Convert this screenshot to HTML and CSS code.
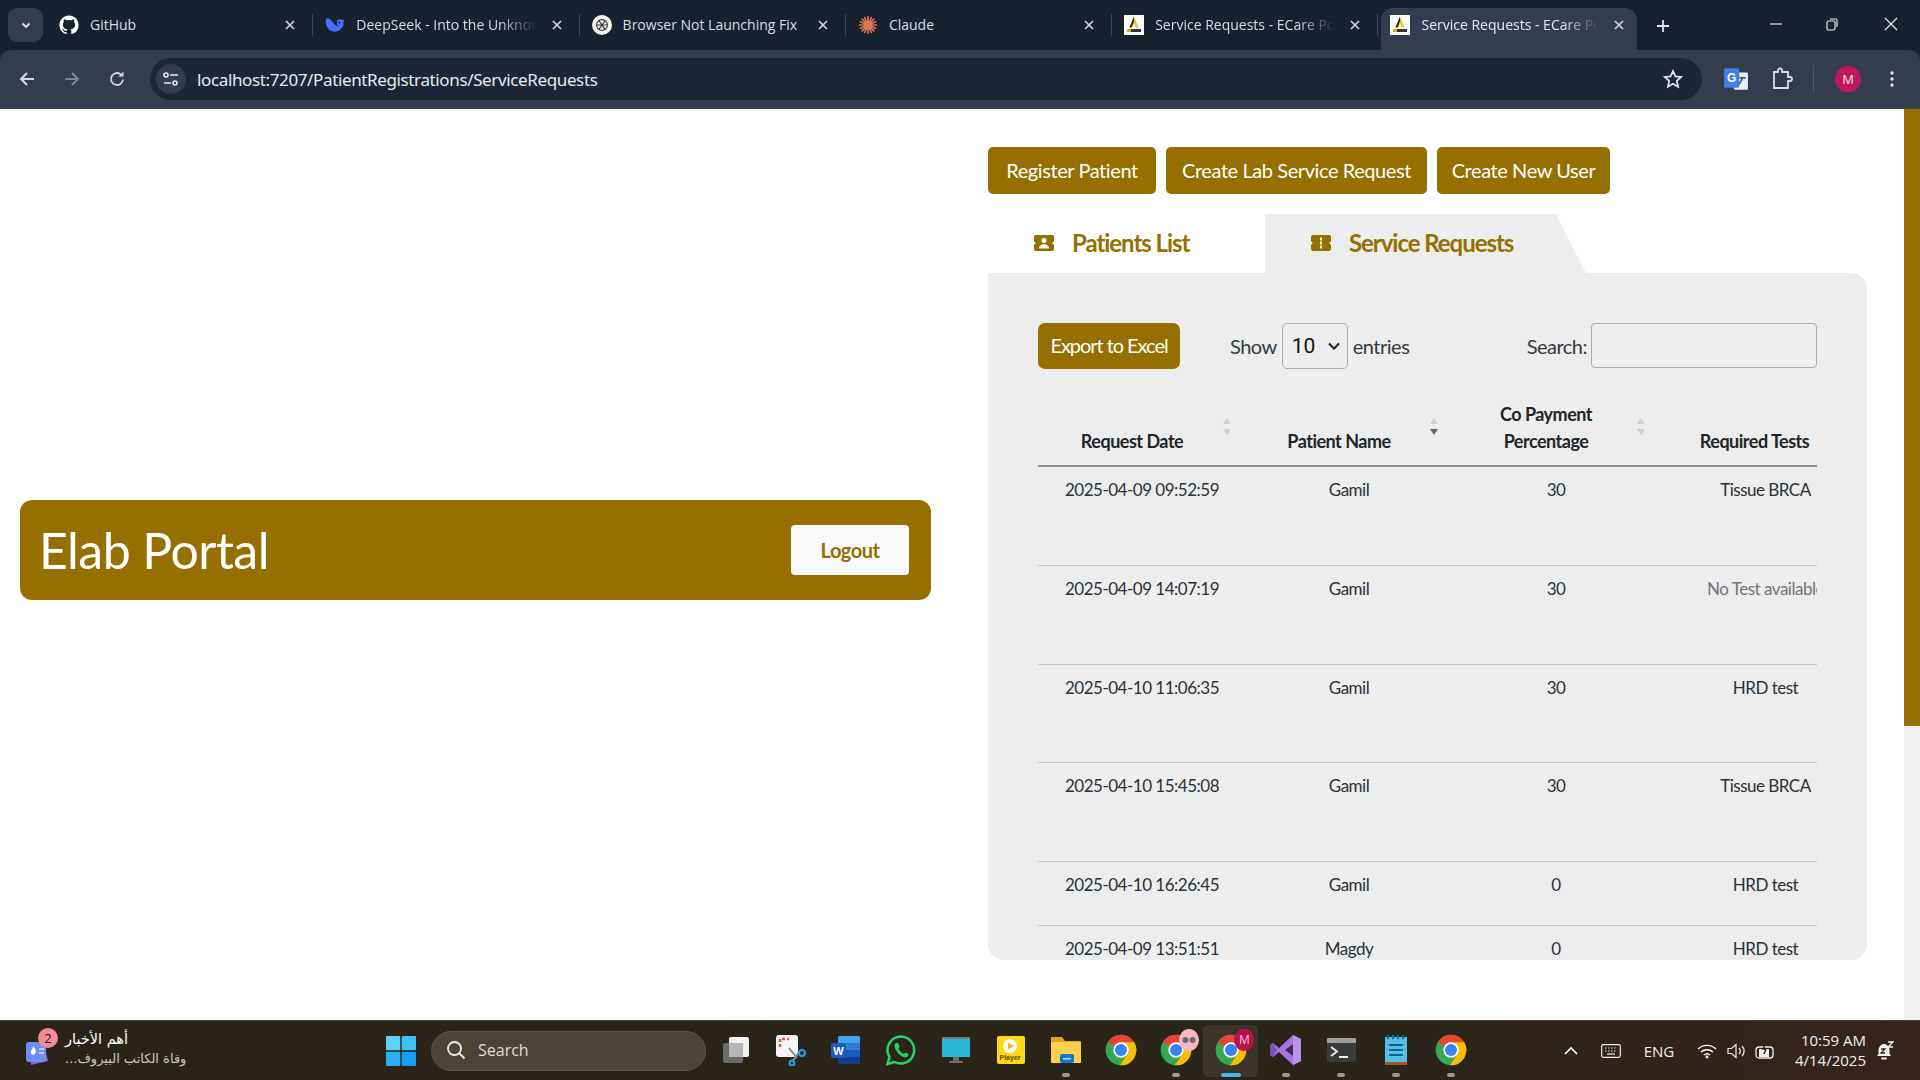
FILE: index.html
```html
<!DOCTYPE html>
<html lang="en">
<head>
<meta charset="utf-8">
<title>Service Requests - ECare Portal</title>
<link rel="stylesheet" href="styles.css">
</head>
<body>
<svg class="defs" width="0" height="0" aria-hidden="true">
  <symbol id="chrome" viewBox="0 0 48 48">
    <circle cx="24" cy="24" r="23" fill="#34a853"/>
    <path d="M4.1 12.5A23 23 0 0 1 43.9 12.5H24A11.5 11.5 0 0 0 14 18Z" fill="#ea4335"/>
    <path d="M43.9 12.5H24L34 30 22.3 46.9A23 23 0 0 0 43.9 12.5Z" fill="#fbbc04"/>
    <circle cx="24" cy="24" r="11.5" fill="#fff"/>
    <circle cx="24" cy="24" r="9" fill="#3b82f0"/>
  </symbol>
  <symbol id="ecare" viewBox="0 0 20 20">
    <rect width="20" height="20" fill="#fff"/>
    <path d="M10 1.500 14.500 12.500H11.500L10 8 8.500 12.500H5.500Z" fill="#e9c41c"/>
    <path d="M10 1.500 5.500 12.500H7.500L10 6Z" fill="#222"/>
    <rect x="3" y="14" width="4" height="3" fill="#e0a81c"/>
    <rect x="7" y="14" width="10" height="3" fill="#333"/>
  </symbol>
  <symbol id="close" viewBox="0 0 12 12">
    <path d="M2 2 10 10M10 2 2 10" stroke="#d5dae2" stroke-width="1.6" fill="none"/>
  </symbol>
</svg>

<header class="chrome">
  <div class="tabstrip">
    <button class="tab-search" aria-label="Search tabs">
      <svg class="ico-12" viewBox="0 0 12 12"><path d="M2.5 4.5 6 8l3.5-3.5" stroke="#e4e8ee" stroke-width="1.8" fill="none"/></svg>
    </button>
    <div class="tab">
      <svg class="favicon" viewBox="0 0 24 24"><path fill="#fff" d="M12 .5C5.65.5.5 5.65.5 12c0 5.08 3.29 9.39 7.86 10.91.58.1.79-.25.79-.56 0-.28-.01-1.02-.02-2-3.2.7-3.87-1.54-3.87-1.54-.52-1.33-1.28-1.68-1.28-1.68-1.04-.71.08-.7.08-.7 1.15.08 1.76 1.19 1.76 1.19 1.03 1.76 2.69 1.25 3.35.96.1-.75.4-1.25.73-1.54-2.55-.29-5.24-1.28-5.24-5.68 0-1.25.45-2.28 1.18-3.08-.12-.29-.51-1.46.11-3.04 0 0 .96-.31 3.15 1.18a10.9 10.9 0 0 1 5.74 0c2.19-1.49 3.15-1.18 3.15-1.18.62 1.58.23 2.75.11 3.04.73.8 1.18 1.83 1.18 3.08 0 4.41-2.69 5.38-5.25 5.67.41.36.78 1.06.78 2.14 0 1.55-.01 2.8-.01 3.18 0 .31.21.67.8.56A11.51 11.51 0 0 0 23.5 12C23.5 5.65 18.35.5 12 .5z"/></svg>
      <span class="tab-title">GitHub</span>
      <svg class="tab-close"><use href="#close"/></svg>
    </div>
    <div class="tab">
      <svg class="favicon" viewBox="0 0 24 24"><path fill="#4d6bfe" d="M23 5c-1 .5-1.400 1-2 1.700C20 5.500 18.800 5 17.500 5.200 15 5.500 14 7.500 14 9l1.500 5c-2-.8-5-3.500-7-6.500C7.500 6 5.500 4.500 3 4 1 4 .5 7 1 10c.8 5 4.500 10 10 10 4 0 6.500-1.500 8-3.500 2.500-1 3.500-4 3-7.500 .5-1 1-2.500 1-4.500Z"/><circle cx="17" cy="9" r="1.300" fill="#17212f"/></svg>
      <span class="tab-title fade">DeepSeek - Into the Unknown</span>
      <svg class="tab-close"><use href="#close"/></svg>
    </div>
    <div class="tab">
      <svg class="favicon" viewBox="0 0 24 24"><circle cx="12" cy="12" r="12" fill="#f4f4f4"/><g fill="none" stroke="#333" stroke-width="1.300"><circle cx="12" cy="12" r="6.500"/><path d="M8 6.500 16 17.500M16 6.500 8 17.500M5.500 12H18.500"/></g></svg>
      <span class="tab-title">Browser Not Launching Fix</span>
      <svg class="tab-close"><use href="#close"/></svg>
    </div>
    <div class="tab">
      <svg class="favicon" viewBox="0 0 24 24"><g stroke="#d97757" stroke-width="2" stroke-linecap="round"><path d="M12 2V22M2 12H22M5 5 19 19M19 5 5 19M8 3 16 21M16 3 8 21M3 8 21 16M3 16 21 8"/></g></svg>
      <span class="tab-title">Claude</span>
      <svg class="tab-close"><use href="#close"/></svg>
    </div>
    <div class="tab">
      <svg class="favicon"><use href="#ecare"/></svg>
      <span class="tab-title fade">Service Requests - ECare Portal</span>
      <svg class="tab-close"><use href="#close"/></svg>
    </div>
    <div class="tab tab-active">
      <svg class="favicon"><use href="#ecare"/></svg>
      <span class="tab-title fade">Service Requests - ECare Portal</span>
      <svg class="tab-close"><use href="#close"/></svg>
    </div>
    <svg class="new-tab" viewBox="0 0 14 14"><path d="M7 1V13M1 7H13" stroke="#dfe3ea" stroke-width="1.800"/></svg>
    <div class="win-controls">
      <svg class="win-ico" viewBox="0 0 14 14"><path d="M1 7H13" stroke="#e8ebef" stroke-width="1.200"/></svg>
      <svg class="win-ico" viewBox="0 0 14 14"><rect x="2" y="4" width="8" height="9" rx="1.500" fill="none" stroke="#e8ebef" stroke-width="1.200"/><path d="M5 2H10.500A1.500 1.500 0 0 1 12 3.500V10" fill="none" stroke="#e8ebef" stroke-width="1.200"/></svg>
      <svg class="win-ico win-close" viewBox="0 0 14 14"><path d="M1 1 13 13M13 1 1 13" stroke="#e8ebef" stroke-width="1.200"/></svg>
    </div>
  </div>
  <div class="toolbar">
    <svg class="nav-ico" viewBox="0 0 18 18"><path d="M16 9H3M9 3 3 9l6 6" stroke="#d5dae2" stroke-width="2" fill="none"/></svg>
    <svg class="nav-ico" viewBox="0 0 18 18"><path d="M2 9H15M9 3l6 6-6 6" stroke="#7c8594" stroke-width="2" fill="none"/></svg>
    <svg class="nav-ico" viewBox="0 0 18 18"><path d="M15 9.500A6 6 0 1 1 13 4.500" stroke="#d5dae2" stroke-width="1.800" fill="none"/><path d="M15.500 1.500V6.500H10.500Z" fill="#d5dae2"/></svg>
    <div class="omnibox">
      <span class="site-chip">
        <svg class="ico-18" viewBox="0 0 18 18"><g stroke="#e4e8ee" stroke-width="1.600" fill="none"><path d="M8 5H16M2 13H9"/><circle cx="4" cy="5" r="2"/><circle cx="13" cy="13" r="2"/></g></svg>
      </span>
      <span class="url">localhost:7207/PatientRegistrations/ServiceRequests</span>
      <svg class="star" viewBox="0 0 20 20"><path d="M10 2 12.400 7.400 18.200 8 13.800 11.900 15.100 17.700 10 14.700 4.900 17.700 6.200 11.900 1.800 8 7.600 7.400Z" fill="none" stroke="#e4e8ee" stroke-width="1.700"/></svg>
    </div>
    <svg class="translate" viewBox="0 0 24 24"><rect x="10" y="6" width="13" height="16" rx="1" fill="#e9edf1"/><path d="M14 18 19 10M15 11h6" stroke="#555" stroke-width="1.500"/><rect x="1" y="2" width="14" height="18" rx="1.500" fill="#3f7fe8"/><text x="8" y="15" class="translate-g">G</text></svg>
    <svg class="ext" viewBox="0 0 24 24"><path d="M9 5V3.500A2 2 0 0 1 13 3.500V5H19V10H21A2 2 0 0 1 21 14H19V21H5V5Z" fill="none" stroke="#d5dae2" stroke-width="1.800"/></svg>
    <span class="tool-sep"></span>
    <span class="avatar">M</span>
    <svg class="menu" viewBox="0 0 4 18"><g fill="#dfe3ea"><circle cx="2" cy="3" r="1.700"/><circle cx="2" cy="9" r="1.700"/><circle cx="2" cy="15" r="1.700"/></g></svg>
  </div>
</header>

<div class="viewport">
  <main class="page">
    <section class="left-col">
      <div class="brand-card">
        <h1 class="brand-title">Elab Portal</h1>
        <button class="btn-logout">Logout</button>
      </div>
    </section>
    <section class="right-col">
      <div class="actions">
        <button class="btn btn-action">Register Patient</button>
        <button class="btn btn-action">Create Lab Service Request</button>
        <button class="btn btn-action">Create New User</button>
      </div>
      <div class="tabs">
        <div class="page-tab page-tab-plain">
          <svg class="tab-ico" viewBox="0 0 20 16"><path fill="#957000" fill-rule="evenodd" d="M2 0H18A2 2 0 0 1 20 2V6.500A1.500 1.500 0 0 0 20 9.500V14A2 2 0 0 1 18 16H2A2 2 0 0 1 0 14V9.500A1.500 1.500 0 0 0 0 6.500V2A2 2 0 0 1 2 0ZM10 3A2.500 2.500 0 1 0 10 8 2.500 2.500 0 0 0 10 3ZM5 13.500H15C15 11 12.800 9.300 10 9.300S5 11 5 13.500Z"/></svg>
          <span>Patients List</span>
        </div>
        <div class="page-tab page-tab-active">
          <svg class="tab-ico" viewBox="0 0 20 16"><path fill="#957000" fill-rule="evenodd" d="M2 0H18A2 2 0 0 1 20 2V6.500A1.500 1.500 0 0 0 20 9.500V14A2 2 0 0 1 18 16H2A2 2 0 0 1 0 14V9.500A1.500 1.500 0 0 0 0 6.500V2A2 2 0 0 1 2 0ZM9 2.500V5.500H11V2.500ZM9 6.500V9.500H11V6.500ZM9 10.500V13.500H11V10.500Z"/></svg>
          <span>Service Requests</span>
        </div>
      </div>
      <div class="panel">
        <div class="table-tools">
          <button class="btn btn-export">Export to Excel</button>
          <label class="show-entries">Show
            <select class="entries-select"><option>10</option><option>25</option></select>
            entries</label>
          <label class="search-label">Search: <input class="search-input" type="text"></label>
        </div>
        <div class="table-wrap">
          <table class="data-table">
            <thead>
              <tr>
                <th><span class="th-label">Request Date</span><span class="sort"><i class="up"></i><i class="down"></i></span></th>
                <th><span class="th-label">Patient Name</span><span class="sort"><i class="up"></i><i class="down on"></i></span></th>
                <th><span class="th-label">Co Payment<br>Percentage</span><span class="sort"><i class="up"></i><i class="down"></i></span></th>
                <th class="th-last"><span class="th-label">Required Tests</span></th>
              </tr>
            </thead>
            <tbody>
              <tr class="row-tall"><td>2025-04-09 09:52:59</td><td>Gamil</td><td>30</td><td>Tissue BRCA</td></tr>
              <tr class="row-tall"><td>2025-04-09 14:07:19</td><td>Gamil</td><td>30</td><td class="muted">No Test available</td></tr>
              <tr class="row-mid"><td>2025-04-10 11:06:35</td><td>Gamil</td><td>30</td><td>HRD test</td></tr>
              <tr class="row-tall"><td>2025-04-10 15:45:08</td><td>Gamil</td><td>30</td><td>Tissue BRCA</td></tr>
              <tr class="row-short"><td>2025-04-10 16:26:45</td><td>Gamil</td><td>0</td><td>HRD test</td></tr>
              <tr class="row-short"><td>2025-04-09 13:51:51</td><td>Magdy</td><td>0</td><td>HRD test</td></tr>
            </tbody>
          </table>
        </div>
      </div>
    </section>
  </main>
  <div class="scrollbar"><div class="scroll-thumb"></div></div>
</div>

<footer class="taskbar">
  <div class="news">
    <span class="news-ico">
      <svg class="news-svg" viewBox="0 0 30 30"><path d="M3 13 20 11 23 25 6 29Z" fill="#8e63d8"/><rect x="1" y="6" width="20" height="20" rx="3" fill="#6f8df2"/><path d="M8 10C10 13 12 14 10 18 8 20 5 18 6 15 7 14 8 12 8 10Z" fill="#fff"/><path d="M14 13H19M14 17H19" stroke="#dfe6ff" stroke-width="1.500"/></svg>
      <span class="news-badge">2</span>
    </span>
    <span class="news-text">
      <span class="news-l1" dir="rtl">أهم الأخبار</span>
      <span class="news-l2" dir="rtl">وفاة الكاتب البيروف...</span>
    </span>
  </div>
  <svg class="start" viewBox="0 0 30 30"><rect width="14.300" height="14.300" rx="1" fill="#5fd0f8"/><rect x="15.700" width="14.300" height="14.300" rx="1" fill="#3ec0f8"/><rect y="15.700" width="14.300" height="14.300" rx="1" fill="#2aaef8"/><rect x="15.700" y="15.700" width="14.300" height="14.300" rx="1" fill="#1a9cf6"/></svg>
  <div class="task-search">
    <svg class="ico-20" viewBox="0 0 20 20"><circle cx="8.500" cy="8.500" r="6.500" fill="none" stroke="#eee" stroke-width="1.800"/><path d="M13.500 13.500 18.500 18.500" stroke="#eee" stroke-width="2"/></svg>
    <span>Search</span>
  </div>
  <div class="task-icons">
    <span class="task-item"><svg class="task-ico" viewBox="0 0 32 32"><rect x="9" y="3" width="20" height="20" rx="2" fill="#f2f2f2"/><rect x="3" y="9" width="20" height="20" rx="2" fill="#6b6b6b"/><rect x="9" y="9" width="14" height="14" fill="#b6b6b6"/></svg></span>
    <span class="task-item"><svg class="task-ico" viewBox="0 0 32 32"><rect x="1" y="1" width="22" height="22" rx="3" fill="#f4f4f4"/><path d="M5 13V5H14" fill="none" stroke="#e0523c" stroke-width="2.500" stroke-dasharray="3 2"/><path d="M14 14 22 24M24 18 17 28" stroke="#888" stroke-width="2"/><circle cx="27" cy="19" r="3" fill="none" stroke="#1aa3e8" stroke-width="2"/><circle cx="17" cy="29" r="2.500" fill="none" stroke="#1aa3e8" stroke-width="2"/></svg></span>
    <span class="task-item"><svg class="task-ico" viewBox="0 0 32 32"><rect x="8" y="2" width="22" height="28" rx="2" fill="#2b7cd3"/><rect x="8" y="2" width="22" height="7" rx="2" fill="#41a5ee"/><rect x="8" y="16" width="22" height="7" fill="#185abd"/><rect x="8" y="23" width="22" height="7" rx="1" fill="#103f91"/><rect x="1" y="9" width="15" height="15" rx="2" fill="#1a5bbd"/><text x="8.500" y="21" class="word-w">W</text></svg></span>
    <span class="task-item"><svg class="task-ico" viewBox="0 0 32 32"><path d="M16 2.500A13.500 13.500 0 0 0 4.500 23L2.500 30 9.500 28A13.500 13.500 0 1 0 16 2.500Z" fill="none" stroke="#25d366" stroke-width="2.500"/><path d="M11 9C9 10 9 13 11 16 13 20 17 23 20 23.300 22.500 23.500 24 21.500 23.500 20L20.500 18.500 18.800 20C17 19.300 14 16.500 13.300 14.500L14.700 12.800 13 9Z" fill="#25d366"/></svg></span>
    <span class="task-item"><svg class="task-ico" viewBox="0 0 32 32"><rect x="2" y="3" width="28" height="20" fill="#2bb6d8"/><rect x="2" y="3" width="28" height="2" fill="#777"/><path d="M13 23H19V27H23V29H9V27H13Z" fill="#6a6a6a"/></svg></span>
    <span class="task-item"><svg class="task-ico" viewBox="0 0 32 32"><rect x="2" y="2" width="28" height="28" rx="2" fill="#fdd815"/><circle cx="15" cy="12" r="7" fill="#fff"/><path d="M13 8.500 19 12 13 15.500Z" fill="#f2b705"/><text x="15" y="26" class="player-text">Player</text></svg></span>
    <span class="task-item has-dot"><svg class="task-ico" viewBox="0 0 32 32"><path d="M1 3H12L15 7H31V29H1Z" fill="#e3a21a"/><rect x="1" y="8" width="30" height="21" rx="1" fill="#fdd14f"/><rect x="10" y="20" width="14" height="9" rx="2" fill="#0a78d0"/><rect x="13" y="24" width="8" height="1.500" fill="#bfe2ff"/></svg></span>
    <span class="task-item"><svg class="task-ico"><use href="#chrome"/></svg></span>
    <span class="task-item has-dot"><svg class="task-ico"><use href="#chrome"/></svg>
      <span class="profile-badge badge-pink"><svg class="ico-14" viewBox="0 0 14 14"><circle cx="3.500" cy="7" r="3" fill="#6a6a6a"/><circle cx="10.500" cy="7" r="3" fill="#6a6a6a"/></svg></span>
    </span>
    <span class="task-item task-active"><svg class="task-ico"><use href="#chrome"/></svg>
      <span class="profile-badge badge-m">M</span>
    </span>
    <span class="task-item has-dot"><svg class="task-ico" viewBox="0 0 32 32"><path d="M23 1 31 5V27L23 31 9 18 3 23 0 21V11L3 9 9 14Z" fill="#a474e0"/><path d="M23 10 15 16 23 22Z" fill="#3a2a5c"/><path d="M23 1V31L31 27V5Z" fill="#bc92f0"/><path d="M3 9 0 11V21L3 23 7 16Z" fill="#7a52b8"/></svg></span>
    <span class="task-item has-dot"><svg class="task-ico" viewBox="0 0 32 32"><rect x="2" y="4" width="29" height="24" rx="2" fill="#3b3b3b"/><rect x="2" y="4" width="29" height="5" rx="1" fill="#a0a0a0"/><path d="M6 13 12 17.500 6 22" fill="none" stroke="#e8e8e8" stroke-width="2"/><path d="M14 23H23" stroke="#f0f0f0" stroke-width="2"/></svg></span>
    <span class="task-item has-dot"><svg class="task-ico" viewBox="0 0 32 32"><rect x="5" y="3" width="22" height="26" fill="#55bfe6"/><rect x="5" y="28" width="22" height="3" fill="#a4521c"/><path d="M9 11H23M9 16H23M9 21H23" stroke="#10628a" stroke-width="2"/><path d="M8 1V5M13 1V5M18 1V5M23 1V5" stroke="#0c6f9b" stroke-width="2"/></svg></span>
    <span class="task-item has-dot"><svg class="task-ico"><use href="#chrome"/></svg></span>
  </div>
  <div class="tray">
    <span class="tray-cell tc-40"><svg class="ico-14" viewBox="0 0 14 14"><path d="M1 10 7 4l6 6" fill="none" stroke="#fff" stroke-width="1.700"/></svg></span>
    <span class="tray-cell tc-40"><svg class="ico-20" viewBox="0 0 20 16"><rect x=".7" y="1.700" width="18.600" height="12.600" rx="1.500" fill="none" stroke="#eee" stroke-width="1.200"/><path d="M4 5H16M4 8H16" stroke="#eee" stroke-width="1.200" stroke-dasharray="1.500 1.500"/><path d="M6 11H14" stroke="#eee" stroke-width="1.200"/></svg></span>
    <span class="tray-cell tc-eng">ENG</span>
    <span class="tray-cell tc-wifi"><svg class="ico-20" viewBox="0 0 20 16"><path d="M1 6A13 13 0 0 1 19 6M4 9A9 9 0 0 1 16 9M7 12A4.500 4.500 0 0 1 13 12" fill="none" stroke="#fff" stroke-width="1.400"/><circle cx="10" cy="14" r="1.400" fill="#fff"/></svg></span>
    <span class="tray-cell tc-vol"><svg class="ico-20" viewBox="0 0 20 16"><path d="M1 5.500H4.500L9 1.500V14.500L4.500 10.500H1Z" fill="none" stroke="#eee" stroke-width="1.200"/><path d="M12 5A4 4 0 0 1 12 11M15 3A7 7 0 0 1 15 13" fill="none" stroke="#eee" stroke-width="1.300"/></svg></span>
    <span class="tray-cell tc-pow"><svg class="ico-20" viewBox="0 0 20 18"><rect x="1" y="5" width="17" height="11" rx="3" fill="none" stroke="#eee" stroke-width="1.300"/><path d="M4 7H14V15H4Z" fill="#eee"/><path d="M11 1 8 7H11L9 12" fill="none" stroke="#2f241c" stroke-width="1.500"/></svg></span>
    <span class="clock"><span>10:59 AM</span><span>4/14/2025</span></span>
    <span class="tray-cell tc-bell"><svg class="ico-20" viewBox="0 0 20 20"><path d="M9 3A6 6 0 0 0 3.500 9V13L2 15H16L14.500 13V9A6 6 0 0 0 9 3Z" fill="#f4f4f4"/><rect x="6" y="16.500" width="6" height="2" rx="1" fill="#f4f4f4"/><path d="M6 8H10L6 12H10" stroke="#30241d" stroke-width="1.300" fill="none"/><path d="M13 1H18L13 6H18" stroke="#f4f4f4" stroke-width="1.300" fill="none"/></svg></span>
  </div>
</footer>
</body>
</html>
```

FILE: styles.css
```css
* { box-sizing: border-box; }
html, body { margin: 0; height: 100%; overflow: hidden; }
body {
  width: 1920px;
  height: 1080px;
  display: flex;
  flex-direction: column;
  background: #fff;
  font-family: "Lato", "Roboto", sans-serif;
  color: #212529;
}
.defs { position: absolute; }
button { font-family: inherit; border: 0; cursor: pointer; white-space: nowrap; }

/* Browser chrome */
.chrome { flex: none; height: 109px; background: #17212f; font-family: "Open Sans", sans-serif; }
.tabstrip { height: 50px; display: flex; align-items: flex-end; padding-left: 8px; position: relative; }
.tab-search {
  width: 35px; height: 34px; margin: 0 4px 8px 0; border-radius: 9px; background: #333d4d;
  display: flex; align-items: center; justify-content: center; padding: 0;
}
.ico-12 { width: 12px; height: 12px; }
.ico-14 { width: 14px; height: 14px; }
.ico-18 { width: 18px; height: 18px; }
.ico-20 { width: 20px; height: 20px; }
.tab {
  width: 266.3px; height: 42px; display: flex; align-items: center; gap: 11px;
  padding: 0 17px 9px 12px; position: relative; color: #d9dee6; font-size: 14px;
}
.tab::after {
  content: ""; position: absolute; right: 0; top: 6px; width: 1px; height: 22px; background: #3f4959;
}
.favicon { width: 20px; height: 20px; flex: none; }
.tab-title { flex: 1; white-space: nowrap; overflow: hidden; min-width: 0; }
.fade { -webkit-mask-image: linear-gradient(90deg, #000 78%, transparent 98%); mask-image: linear-gradient(90deg, #000 78%, transparent 98%); }
.tab-close { width: 12px; height: 12px; flex: none; }
.tab-active { width: 256px; margin-left: 3px; background: #333d4d; border-radius: 12px 12px 0 0; padding: 0 12px 9px 9px; color: #e7ebf0; }
.tab-active::after { display: none; }
.new-tab { width: 14px; height: 14px; margin: 0 0 17px 19px; }
.win-controls { margin-left: auto; display: flex; gap: 42px; padding-right: 22px; height: 42px; align-items: flex-start; padding-top: 9px; }
.win-close { margin-left: 3px; }
.win-ico { width: 14px; height: 14px; }
.toolbar {
  height: 59px; background: #333d4d; border-radius: 10px 10px 0 0; display: flex; align-items: center;
  padding-left: 18px; border-bottom: 2px solid #3a4452;
}
.nav-ico { width: 18px; height: 18px; margin-right: 27px; flex: none; }
.omnibox {
  margin-left: -3px; width: 1552px; height: 42px; border-radius: 21px; background: #1c2636; display: flex; align-items: center; padding-left: 6px;
}
.site-chip { width: 30px; height: 30px; border-radius: 50%; background: #333d4d; display: flex; align-items: center; justify-content: center; flex: none; }
.url { margin-left: 11px; padding-top: 1px; font-family: "Noto Sans", sans-serif; font-size: 17px; letter-spacing: -.37px; color: #e8ebf0; flex: 1; white-space: nowrap; }
.star { width: 20px; height: 20px; margin-right: 19px; flex: none; }
.translate { width: 26px; height: 26px; margin-left: 21px; flex: none; }
.translate-g { font: 700 11px "Liberation Sans", sans-serif; fill: #fff; text-anchor: middle; }
.ext { width: 24px; height: 24px; margin-left: 20px; flex: none; }
.tool-sep { width: 1px; height: 28px; background: #4c5666; margin-left: 20px; }
.avatar {
  width: 26px; height: 26px; border-radius: 50%; background: #c2185b; color: #f8e3ec; margin-left: 21px;
  display: flex; align-items: center; justify-content: center; font-size: 13px; flex: none;
}
.menu { width: 4px; height: 18px; margin-left: 29px; flex: none; }

/* Page */
.viewport { flex: 1; display: flex; min-height: 0; }
.page { flex: 1; display: flex; min-width: 0; }
.left-col { width: 988px; padding: 391px 57px 0 20px; flex: none; }
.brand-card {
  height: 100px; background: #957000; border-radius: 12px; display: flex; align-items: center;
  justify-content: space-between; padding: 0 22px 0 19px;
}
.brand-title { margin: 0; font-size: 50px; font-weight: 400; color: #fff; line-height: 1; letter-spacing: -.55px; }
.btn-logout {
  width: 118px; height: 50px; background: #f8f9fa; color: #957000; font-size: 20px; border-radius: 4px; font-weight: 700; letter-spacing: -.5px;
}
.right-col { width: 879px; padding-top: 38px; flex: none; }
.actions { display: flex; gap: 10px; height: 47px; }
.btn { background: #957000; color: #fff; border-radius: 5px; padding: 0; }
.btn-action { height: 47px; font-size: 20px; font-weight: 400; letter-spacing: -.42px; padding-bottom: 2px; }
.btn-action:nth-child(1) { width: 168px; }
.btn-action:nth-child(2) { width: 261px; }
.btn-action:nth-child(3) { width: 173px; }
.tabs { display: flex; margin-top: 20px; height: 59px; }
.page-tab {
  display: flex; align-items: center; gap: 18px; color: #957000; font-size: 24px; font-weight: 700; letter-spacing: -1.05px; padding-bottom: 2px;
}
.tab-ico { width: 20px; height: 16px; flex: none; }
.page-tab-plain { width: 277px; padding-left: 46px; }
.page-tab-active {
  width: 321px; padding-left: 46px; background: #ededed;
  clip-path: polygon(0 0, calc(100% - 30px) 0, 100% 100%, 0 100%);
}
.panel {
  height: 687px; background: #ededed; border-radius: 0 16px 16px 16px; padding: 50px 50px 0; overflow: hidden;
}
.table-tools { display: flex; align-items: flex-start; height: 46px; font-size: 20px; letter-spacing: -.5px; color: #343a40; }
.btn-export { width: 142px; height: 46px; font-size: 20px; border-radius: 7px; flex: none; letter-spacing: -1.05px; padding-bottom: 2px; }
.show-entries { margin-left: 50px; height: 46px; display: flex; align-items: center; gap: 5px; }
.entries-select {
  appearance: none; -webkit-appearance: none;
  width: 66px; height: 46px; font: 21px "Roboto", sans-serif; letter-spacing: 0; border: 1px solid #aaa; border-radius: 5px; color: #111; padding-left: 9px;
  background: #ededed url("data:image/svg+xml;utf8,<svg xmlns='http://www.w3.org/2000/svg' width='12' height='8'><path d='M1 1.500 6 6.500 11 1.500' fill='none' stroke='%23222' stroke-width='2'/></svg>") no-repeat right 7px center;
}
.search-label { margin-left: auto; height: 45px; display: flex; align-items: center; gap: 4px; }
.search-input { width: 226px; height: 45px; border: 1px solid #aaa; border-radius: 4px; background: transparent; }
.table-wrap { margin-top: 31px; width: 779px; overflow: hidden; }
.data-table { border-collapse: collapse; table-layout: fixed; width: 833px; }
.data-table th {
  position: relative; height: 66px; vertical-align: bottom; padding: 0 19px 10px 0; font-size: 18px; font-weight: 700; letter-spacing: -.5px;
  line-height: 27px; text-align: center; border-bottom: 2px solid #8d8d8d; color: #212529; width: 207px;
}
.data-table th.th-last { width: 212px; padding-right: 21px; }
.th-label { display: inline-block; }
.sort { position: absolute; right: 14px; top: 18px; display: flex; flex-direction: column; gap: 5px; }
.sort i { display: block; width: 0; height: 0; border-left: 4px solid transparent; border-right: 4px solid transparent; }
.sort .up { border-bottom: 6px solid #d0d0d0; }
.sort .down { border-top: 6px solid #d0d0d0; }
.sort .down.on { border-top-color: #666; }
.data-table td { vertical-align: top; padding: 11px 0 0 1px; text-align: center; font-size: 17px; line-height: 24px; letter-spacing: -.5px; color: #2b3138; border-bottom: 1px solid #c9c9c9; white-space: nowrap; }
.row-tall { height: 99px; }
.row-mid { height: 98px; }
.row-short { height: 64px; }
.muted { color: #6c757d !important; }

/* Scrollbar */
.scrollbar { width: 16px; flex: none; background: #f1f1f1; }
.scroll-thumb { height: 617px; background: #957000; }

/* Taskbar */
.taskbar {
  flex: none; height: 60px; display: flex; align-items: center; border-top: 1px solid #45413a;
  background: linear-gradient(90deg, #2a2418 0%, #2a2419 70%, #36241e 100%); color: #f1f1f1; font-family: "Open Sans", sans-serif;
}
.news { width: 386px; display: flex; align-items: center; padding-left: 25px; flex: none; }
.news-ico { position: relative; width: 30px; height: 30px; margin-right: 10px; flex: none; }
.news-svg { width: 30px; height: 30px; display: block; }
.news-badge {
  position: absolute; left: 13px; top: -8px; width: 20px; height: 20px; border-radius: 50%; background: #f58a94; color: #1c1c1c;
  font-size: 13px; display: flex; align-items: center; justify-content: center;
}
.news-text { display: flex; flex-direction: column; align-items: flex-start; padding-bottom: 4px; font-family: "DejaVu Sans", sans-serif; }
.news-l1 { font-size: 14.5px; line-height: 20px; color: #fff; }
.news-l2 { font-size: 13px; line-height: 20px; color: #c9c6bf; }
.start { width: 30px; height: 30px; flex: none; }
.task-search {
  width: 275px; height: 40px; margin-left: 15px; border-radius: 20px; background: #4b4437; border: 1px solid #5a5345;
  display: flex; align-items: center; gap: 12px; padding: 0 0 1px 14px; font-size: 16px; color: #ddd; flex: none;
}
.task-icons { display: flex; margin-left: 2px; flex: none; }
.task-item { width: 55.05px; height: 52px; display: flex; align-items: center; justify-content: center; position: relative; padding-bottom: 2px; }
.task-ico { width: 32px; height: 32px; }
.has-dot::after {
  content: ""; position: absolute; left: 50%; bottom: 0; width: 8px; height: 3.500px; margin-left: -4px; border-radius: 2px; background: #9a9a96;
}
.task-active { background: #3b3529; border-radius: 5px; }
.task-active::after {
  content: ""; position: absolute; left: 50%; bottom: 0; width: 20px; height: 3.500px; margin-left: -10px; border-radius: 2px; background: #3fb5f5;
}
.profile-badge {
  position: absolute; left: 31px; top: 4px; width: 20px; height: 22px; border-radius: 50%;
  display: flex; align-items: center; justify-content: center; font-size: 12px;
}
.badge-pink { background: #f7b6c7; }
.badge-m { background: #b8134f; color: #f3c6d8; }
.word-w { font: 700 11px "Liberation Sans", sans-serif; fill: #fff; text-anchor: middle; }
.player-text { font: 700 7px "Liberation Sans", sans-serif; fill: #5a4a00; text-anchor: middle; }
.tray { margin-left: auto; display: flex; align-items: center; padding-right: 16px; flex: none; }
.tray-cell { display: flex; align-items: center; justify-content: center; flex: none; }
.tc-40 { width: 40px; }
.tc-eng { width: 56px; font-size: 15px; color: #f1f1f1; }
.tc-wifi { width: 33px; margin-left: 3px; }
.tc-vol { width: 27px; }
.tc-pow { width: 30px; }
.tc-bell { width: 38px; }
.clock { width: 86px; display: flex; flex-direction: column; align-items: flex-end; padding-bottom: 2px; font-size: 15px; line-height: 20px; }
```
